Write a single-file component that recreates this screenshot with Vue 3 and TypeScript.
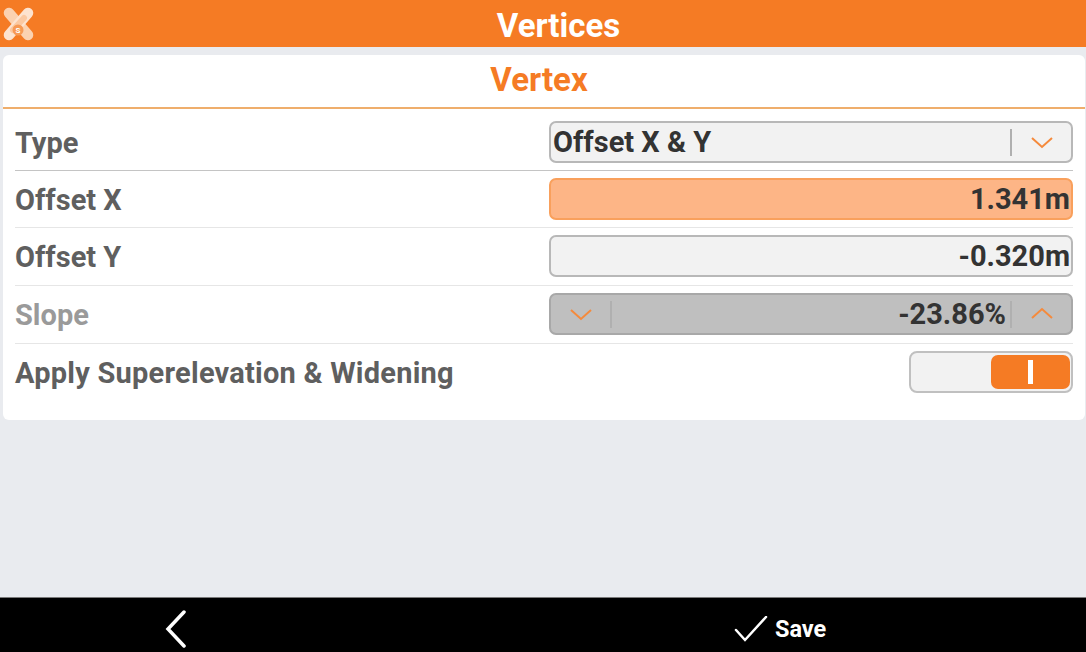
<template>
  <div class="screen">
    <header class="topbar">
      <svg class="logo" width="34" height="34" viewBox="0 0 34 34">
        <path d="M8 6 L27 28" stroke="#fbd2b1" stroke-width="10.5" stroke-linecap="round" />
        <path d="M27 6 L8 28" stroke="#fde3cf" stroke-width="10.5" stroke-linecap="round" />
        <path d="M12 23 L23 11" stroke="#fbc9a2" stroke-width="6" stroke-linecap="round" />
        <circle cx="17" cy="23" r="5.5" fill="#f79a55" />
        <text x="17" y="26" text-anchor="middle" class="logo-s">S</text>
      </svg>
      <span class="title">Vertices</span>
    </header>

    <main class="body">
      <section class="card">
        <h2 class="card-title">Vertex</h2>

        <div class="rows">
          <div class="row first">
            <label>Type</label>
            <div class="control select">
              <span class="value left">Offset X &amp; Y</span>
              <span class="divider"></span>
              <span class="btn">
                <svg width="24" height="14" viewBox="0 0 24 14"><path d="M2 3 L12 12 L22 3" class="chev" /></svg>
              </span>
            </div>
          </div>

          <div class="row second">
            <label>Offset X</label>
            <div class="control active">
              <span class="value">1.341m</span>
            </div>
          </div>

          <div class="row">
            <label>Offset Y</label>
            <div class="control">
              <span class="value">-0.320m</span>
            </div>
          </div>

          <div class="row">
            <label class="disabled-label">Slope</label>
            <div class="control disabled">
              <span class="btn">
                <svg width="24" height="14" viewBox="0 0 24 14"><path d="M2 3 L12 12 L22 3" class="chev" /></svg>
              </span>
              <span class="divider"></span>
              <span class="value">-23.86%</span>
              <span class="divider"></span>
              <span class="btn">
                <svg width="24" height="14" viewBox="0 0 24 14"><path d="M2 11 L12 2 L22 11" class="chev" /></svg>
              </span>
            </div>
          </div>

          <div class="row last">
            <label class="long-label">Apply Superelevation &amp; Widening</label>
            <div class="toggle">
              <span class="knob"><i></i></span>
            </div>
          </div>
        </div>
      </section>
    </main>

    <footer class="bottombar">
      <div class="foot-side back">
        <svg width="26" height="38" viewBox="0 0 26 38">
          <path d="M21 2 L5 19 L21 36" class="foot-icon" />
        </svg>
      </div>
      <div class="foot-side save">
        <svg width="34" height="26" viewBox="0 0 34 26">
          <path d="M2 14 L11 24 L32 1" class="foot-icon thin" />
        </svg>
        <span>Save</span>
      </div>
    </footer>
  </div>
</template>

<script setup lang="ts">
</script>

<style>
html,
body {
  margin: 0;
  padding: 0;
  background: #e9ebef;
}
</style>

<style scoped>
.screen {
  width: 1086px;
  height: 652px;
  display: flex;
  flex-direction: column;
  overflow: hidden;
  background: #e9ebef;
  font-family: Roboto, "Liberation Sans", sans-serif;
}

.topbar {
  height: 47px;
  flex: none;
  position: relative;
  display: flex;
  align-items: center;
  justify-content: center;
  background: #f57b24;
}

.logo {
  position: absolute;
  left: 1px;
  top: 7px;
}

.logo-s {
  font-size: 8px;
  font-weight: 700;
  fill: #fff;
}

.title {
  color: #fff;
  font-size: 33px;
  font-weight: 700;
  line-height: 47px;
  margin-top: 3px;
  padding-left: 31px;
}

.body {
  flex: 1;
  padding: 8px 1px 0 3px;
}

.card {
  height: 365px;
  box-sizing: border-box;
  background: #fff;
  border-radius: 6px;
}

.card-title {
  margin: 0;
  height: 54px;
  box-sizing: border-box;
  padding-right: 10px;
  border-bottom: 2px solid #efae6c;
  text-align: center;
  color: #f57b24;
  font-size: 33px;
  font-weight: 700;
  line-height: 50px;
}

.rows {
  padding: 0 12px;
}

.row {
  height: 58px;
  box-sizing: border-box;
  padding-bottom: 1px;
  display: flex;
  align-items: center;
  justify-content: space-between;
  border-bottom: 1px solid #e6e6e6;
}

.row.first {
  height: 62px;
  padding: 5px 0 0;
  border-bottom-color: #c4c4c4;
}

.row.second {
  height: 57px;
  padding-bottom: 0;
}

.row.last {
  padding-bottom: 2px;
  border-bottom: none;
}

label {
  color: #5f5f5f;
  font-size: 29px;
  font-weight: 700;
  margin-top: 2px;
}

.long-label {
  letter-spacing: 0.23px;
}

.disabled-label {
  color: #9a9a9a;
}

.control {
  width: 524px;
  height: 42px;
  box-sizing: border-box;
  display: flex;
  align-items: center;
  justify-content: flex-end;
  padding: 0 1px 0 2px;
  border: 2px solid #b8b8b8;
  border-radius: 7px;
  background: #f2f2f2;
}

.control.select {
  padding-right: 0;
}

.control.active {
  background: #fdb586;
  border-color: #f9a05c;
}

.control.disabled {
  background: #bfbfbf;
  border-color: #a8a8a8;
  padding: 0;
}

.value {
  color: #333;
  font-size: 29px;
  font-weight: 700;
  white-space: nowrap;
}

.value.left {
  flex: 1;
  margin-top: -1px;
}

.control.disabled .value {
  flex: 1;
  text-align: right;
  padding-right: 4px;
}

.divider {
  width: 2px;
  height: 27px;
  background: #b0b0b0;
  flex: none;
}

.btn {
  width: 59px;
  flex: none;
  display: flex;
  align-items: center;
  justify-content: center;
}

.chev {
  fill: none;
  stroke: #f58a3c;
  stroke-width: 2;
}

.toggle {
  width: 164px;
  height: 42px;
  box-sizing: border-box;
  display: flex;
  justify-content: flex-end;
  align-items: center;
  padding-right: 1px;
  border: 2px solid #c0c0c0;
  border-radius: 8px;
  background: #f2f2f2;
}

.knob {
  width: 79px;
  height: 34px;
  display: flex;
  align-items: center;
  justify-content: center;
  border-radius: 7px;
  background: #f57b24;
}

.knob i {
  width: 5px;
  height: 24px;
  background: #fff;
}

.bottombar {
  height: 55px;
  flex: none;
  display: flex;
  align-items: center;
  padding-top: 7px;
  background: #000;
  border-top: 1px solid #7a7a7a;
  box-sizing: border-box;
}

.foot-side {
  display: flex;
  align-items: center;
}

.back {
  margin-left: 163px;
}

.save {
  margin-left: 545px;
  gap: 7px;
  color: #fff;
  font-size: 23.5px;
  font-weight: 700;
}

.foot-icon {
  fill: none;
  stroke: #fff;
  stroke-width: 3.5;
  stroke-linecap: round;
  stroke-linejoin: miter;
}

.foot-icon.thin {
  stroke-width: 2.5;
}
</style>
